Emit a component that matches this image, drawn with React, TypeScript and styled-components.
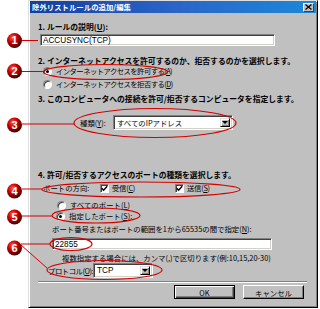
import React from "react";
import styled, { createGlobalStyle } from "styled-components";

const Global = createGlobalStyle`
  html, body { margin: 0; padding: 0; background: #fff; }
  body { font-family: "Noto Sans CJK JP", "Noto Sans", sans-serif; }
  * { box-sizing: border-box; }
`;

const Stage = styled.div`
  position: relative;
  width: 320px;
  height: 309px;
  display: flex;
  background: #fff;
  overflow: hidden;
`;

const Gutter = styled.div`
  width: 28px;
  flex: none;
`;

const Dialog = styled.div`
  width: 290px;
  height: 308px;
  flex: none;
  background: #c0c0c0;
  border: 1px solid;
  border-color: #dfdfdf #000 #000 #dfdfdf;
  box-shadow: inset 1px 1px #fff, inset -1px -1px #808080;
  display: flex;
  flex-direction: column;
  font-family: "Noto Sans CJK JP", sans-serif;
  font-size: 7.4px;
  color: #000;
`;

const TitleBar = styled.div`
  height: 12px;
  margin: 0 1px;
  padding: 0 2px 0 2px;
  display: flex;
  align-items: center;
  justify-content: space-between;
  background: linear-gradient(90deg, #123f9e 0%, #2a64c8 50%, #1b88d8 100%);
  color: #fff;
  font-weight: bold;
  font-size: 7.4px;
  line-height: 12px;
`;

const CloseButton = styled.div`
  width: 11px;
  height: 9px;
  background: #c0c0c0;
  border: 1px solid;
  border-color: #fff #404040 #404040 #fff;
  display: flex;
  align-items: center;
  justify-content: center;
`;

const Body = styled.div`
  display: flex;
  flex-direction: column;
  padding-left: 9px;
`;

const Header = styled.div<{ $mt: number }>`
  margin-top: ${(p) => p.$mt}px;
  height: 10px;
  line-height: 10px;
  font-size: 7.8px;
  font-weight: bold;
  white-space: nowrap;
`;

const Line = styled.div<{ $mt: number; $ml: number; $ls?: number }>`
  margin-top: ${(p) => p.$mt}px;
  margin-left: ${(p) => p.$ml}px;
  height: 10px;
  line-height: 10px;
  white-space: nowrap;
  letter-spacing: ${(p) => p.$ls ?? 0}px;
  display: flex;
  align-items: center;
`;

const Field = styled.input<{ $mt: number; $ml: number; $w: number }>`
  margin: ${(p) => p.$mt}px 0 0 ${(p) => p.$ml}px;
  width: ${(p) => p.$w}px;
  height: 12px;
  padding: 0 2px;
  background: #fff;
  border: 1px solid;
  border-color: #808080 #fff #fff #808080;
  box-shadow: inset 1px 1px #404040, inset -1px -1px #d4d0c8;
  font-family: "Liberation Sans", Arial, sans-serif;
  font-size: 8.2px;
  color: #000;
  outline: none;
`;

const RadioDot = styled.span<{ $on?: boolean }>`
  width: 9px;
  height: 9px;
  border-radius: 50%;
  background: #fff;
  border: 1px solid;
  border-color: #808080 #fff #fff #808080;
  box-shadow: inset 1px 1px #404040;
  margin-right: 4px;
  flex: none;
  display: flex;
  align-items: center;
  justify-content: center;
  &::after {
    content: "";
    width: 3px;
    height: 3px;
    border-radius: 50%;
    background: ${(p) => (p.$on ? "#000" : "transparent")};
  }
`;

const CheckBox = styled.span`
  width: 9px;
  height: 9px;
  background: #fff;
  border: 1px solid;
  border-color: #808080 #fff #fff #808080;
  box-shadow: inset 1px 1px #404040;
  margin-right: 3px;
  flex: none;
  display: flex;
  align-items: center;
  justify-content: center;
`;

const SelectRow = styled.div<{ $mt: number; $ml: number; $h: number }>`
  margin-top: ${(p) => p.$mt}px;
  margin-left: ${(p) => p.$ml}px;
  height: ${(p) => p.$h}px;
  display: flex;
  align-items: center;
  white-space: nowrap;
`;

const RowLabel = styled.span<{ $w: number; $ls?: number }>`
  width: ${(p) => p.$w}px;
  flex: none;
  letter-spacing: ${(p) => p.$ls ?? 0}px;
`;

const Select = styled.div<{ $w: number; $h: number; $latin?: boolean }>`
  width: ${(p) => p.$w}px;
  height: ${(p) => p.$h}px;
  background: #fff;
  border: 1px solid;
  border-color: #808080 #fff #fff #808080;
  box-shadow: inset 1px 1px #404040, inset -1px -1px #d4d0c8;
  display: flex;
  align-items: center;
  justify-content: space-between;
  padding: 2px 2px 2px 3px;
  font-family: ${(p) =>
    p.$latin ? '"Liberation Sans", Arial, sans-serif' : '"Noto Sans CJK JP", sans-serif'};
  font-size: ${(p) => (p.$latin ? "8.2px" : "7.4px")};
`;

const DropButton = styled.span`
  width: 10px;
  height: 100%;
  background: #c0c0c0;
  border: 1px solid;
  border-color: #dfdfdf #000 #000 #dfdfdf;
  box-shadow: inset 1px 1px #fff, inset -1px -1px #808080;
  display: flex;
  align-items: center;
  justify-content: center;
  &::after {
    content: "";
    border-left: 3px solid transparent;
    border-right: 3px solid transparent;
    border-top: 3px solid #000;
  }
`;

const CheckLabel = styled.span<{ $ml: number }>`
  margin-left: ${(p) => p.$ml}px;
  display: flex;
  align-items: center;
`;

const Separator = styled.div`
  margin: 3px 10px 0 0;
  height: 2px;
  border-top: 1px solid #808080;
  border-bottom: 1px solid #fff;
`;

const ButtonRow = styled.div`
  margin-top: 2px;
  padding-right: 13px;
  display: flex;
  justify-content: flex-end;
  gap: 8px;
`;

const Button = styled.div<{ $default?: boolean }>`
  width: 61px;
  height: 14px;
  background: #c0c0c0;
  border: 1px solid #000;
  border-color: ${(p) => (p.$default ? "#000" : "#fff #000 #000 #fff")};
  box-shadow: ${(p) =>
    p.$default
      ? "inset 1px 1px #fff, inset -1px -1px #404040, inset -2px -2px #808080"
      : "inset -1px -1px #808080"};
  display: flex;
  align-items: center;
  justify-content: center;
  font-size: 7.4px;
`;

const Overlay = styled.svg`
  position: absolute;
  left: 0;
  top: 0;
  width: 320px;
  height: 309px;
  pointer-events: none;
`;

const balls = [
  { n: 1, cy: 40.5 },
  { n: 2, cy: 71 },
  { n: 3, cy: 125 },
  { n: 4, cy: 191 },
  { n: 5, cy: 217 },
  { n: 6, cy: 248 },
];

const ellipses = [
  { cx: 105.5, cy: 72, rx: 62, ry: 7.5 },
  { cx: 155, cy: 123, rx: 81, ry: 14.5 },
  { cx: 141, cy: 189.5, rx: 99, ry: 7.5 },
  { cx: 96, cy: 215.5, rx: 44, ry: 7.5 },
  { cx: 71, cy: 244, rx: 21, ry: 6.5 },
  { cx: 104.5, cy: 270, rx: 57.5, ry: 9.5 },
];

const lines = [
  [22, 40.5, 38, 40.5],
  [22, 71.5, 43, 71.5],
  [22, 124, 74, 124],
  [22, 189, 42, 189],
  [21, 216, 52, 216],
  [21, 244, 50, 244],
  [21, 245, 47, 268],
];

function Annotations() {
  return (
    <Overlay viewBox="0 0 320 309">
      <defs>
        <radialGradient id="ball" cx="38%" cy="32%" r="70%">
          <stop offset="0%" stopColor="#ff5a4a" />
          <stop offset="45%" stopColor="#cc0000" />
          <stop offset="100%" stopColor="#3a0000" />
        </radialGradient>
      </defs>
      {ellipses.map((e, i) => (
        <ellipse key={i} cx={e.cx} cy={e.cy} rx={e.rx} ry={e.ry} fill="none" stroke="#d40000" strokeWidth={1.2} />
      ))}
      {lines.map((l, i) => (
        <line key={i} x1={l[0]} y1={l[1]} x2={l[2]} y2={l[3]} stroke="#d40000" strokeWidth={1} />
      ))}
      {balls.map((b) => (
        <g key={b.n}>
          <circle cx={14.5} cy={b.cy} r={7.5} fill="url(#ball)" />
          <text
            x={14.5}
            y={b.cy + 3.8}
            textAnchor="middle"
            fill="#fff"
            fontFamily="Liberation Sans, Arial, sans-serif"
            fontWeight="bold"
            fontSize="11"
          >
            {b.n}
          </text>
        </g>
      ))}
    </Overlay>
  );
}

const Check = () => (
  <svg width="7" height="7" viewBox="0 0 7 7">
    <path d="M0.8 3.2 L2.6 5.2 L6.2 1.2" stroke="#000" strokeWidth="1.4" fill="none" />
  </svg>
);

export default function App() {
  return (
    <>
      <Global />
      <Stage>
        <Gutter />
        <Dialog>
          <TitleBar>
            <span>除外リストルールの追加/編集</span>
            <CloseButton>
              <svg width="7" height="6" viewBox="0 0 7 6">
                <path d="M0.5 0.5 L6.5 5.5 M6.5 0.5 L0.5 5.5" stroke="#000" strokeWidth="1.3" />
              </svg>
            </CloseButton>
          </TitleBar>
          <Body>
            <Header $mt={9}>
              1. ルールの説明(<u>U</u>):
            </Header>
            <Field $mt={2} $ml={2} $w={235} readOnly value="ACCUSYNC(TCP)" />
            <Header $mt={10}>2. インターネットアクセスを許可するのか、拒否するのかを選択します。</Header>
            <Line $mt={0} $ml={5} $ls={-0.6}>
              <RadioDot $on />
              インターネットアクセスを許可する(<u>A</u>)
            </Line>
            <Line $mt={3} $ml={5} $ls={-0.6}>
              <RadioDot />
              インターネットアクセスを拒否する(<u>D</u>)
            </Line>
            <Header $mt={5}>3. このコンピュータへの接続を許可/拒否するコンピュータを指定します。</Header>
            <SelectRow $mt={11} $ml={42} $h={15}>
              <RowLabel $w={33}>
                種類(<u>Y</u>):
              </RowLabel>
              <Select $w={120} $h={15}>
                <span>すべてのIPアドレス</span>
                <DropButton />
              </Select>
            </SelectRow>
            <Header $mt={40}>4. 許可/拒否するアクセスのポートの種類を選択します。</Header>
            <Line $mt={3} $ml={5} $ls={-0.3}>
              <RowLabel $w={57}>ポートの方向:</RowLabel>
              <CheckLabel $ml={0}>
                <CheckBox>
                  <Check />
                </CheckBox>
                受信(<u>C</u>)
              </CheckLabel>
              <CheckLabel $ml={40}>
                <CheckBox>
                  <Check />
                </CheckBox>
                送信(<u>S</u>)
              </CheckLabel>
            </Line>
            <Line $mt={7} $ml={19}>
              <RadioDot />
              すべてのポート(<u>L</u>)
            </Line>
            <Line $mt={1} $ml={18}>
              <RadioDot $on />
              指定したポート(<u>S</u>):
            </Line>
            <Line $mt={3} $ml={14}>
              ポート番号またはポートの範囲を1から65535の間で指定(<u>N</u>):
            </Line>
            <Field $mt={4} $ml={14} $w={220} readOnly value="22855" />
            <Line $mt={3} $ml={24}>
              複数指定する場合には、カンマ(,)で区切ります(例:10,15,20-30)
            </Line>
            <SelectRow $mt={0} $ml={10} $h={15}>
              <RowLabel $w={45} $ls={-0.5}>
                プロトコル(<u>O</u>):
              </RowLabel>
              <Select $w={60} $h={15} $latin>
                <span>TCP</span>
                <DropButton />
              </Select>
            </SelectRow>
            <Separator />
            <ButtonRow>
              <Button $default>OK</Button>
              <Button>キャンセル</Button>
            </ButtonRow>
          </Body>
        </Dialog>
        <Annotations />
      </Stage>
    </>
  );
}
